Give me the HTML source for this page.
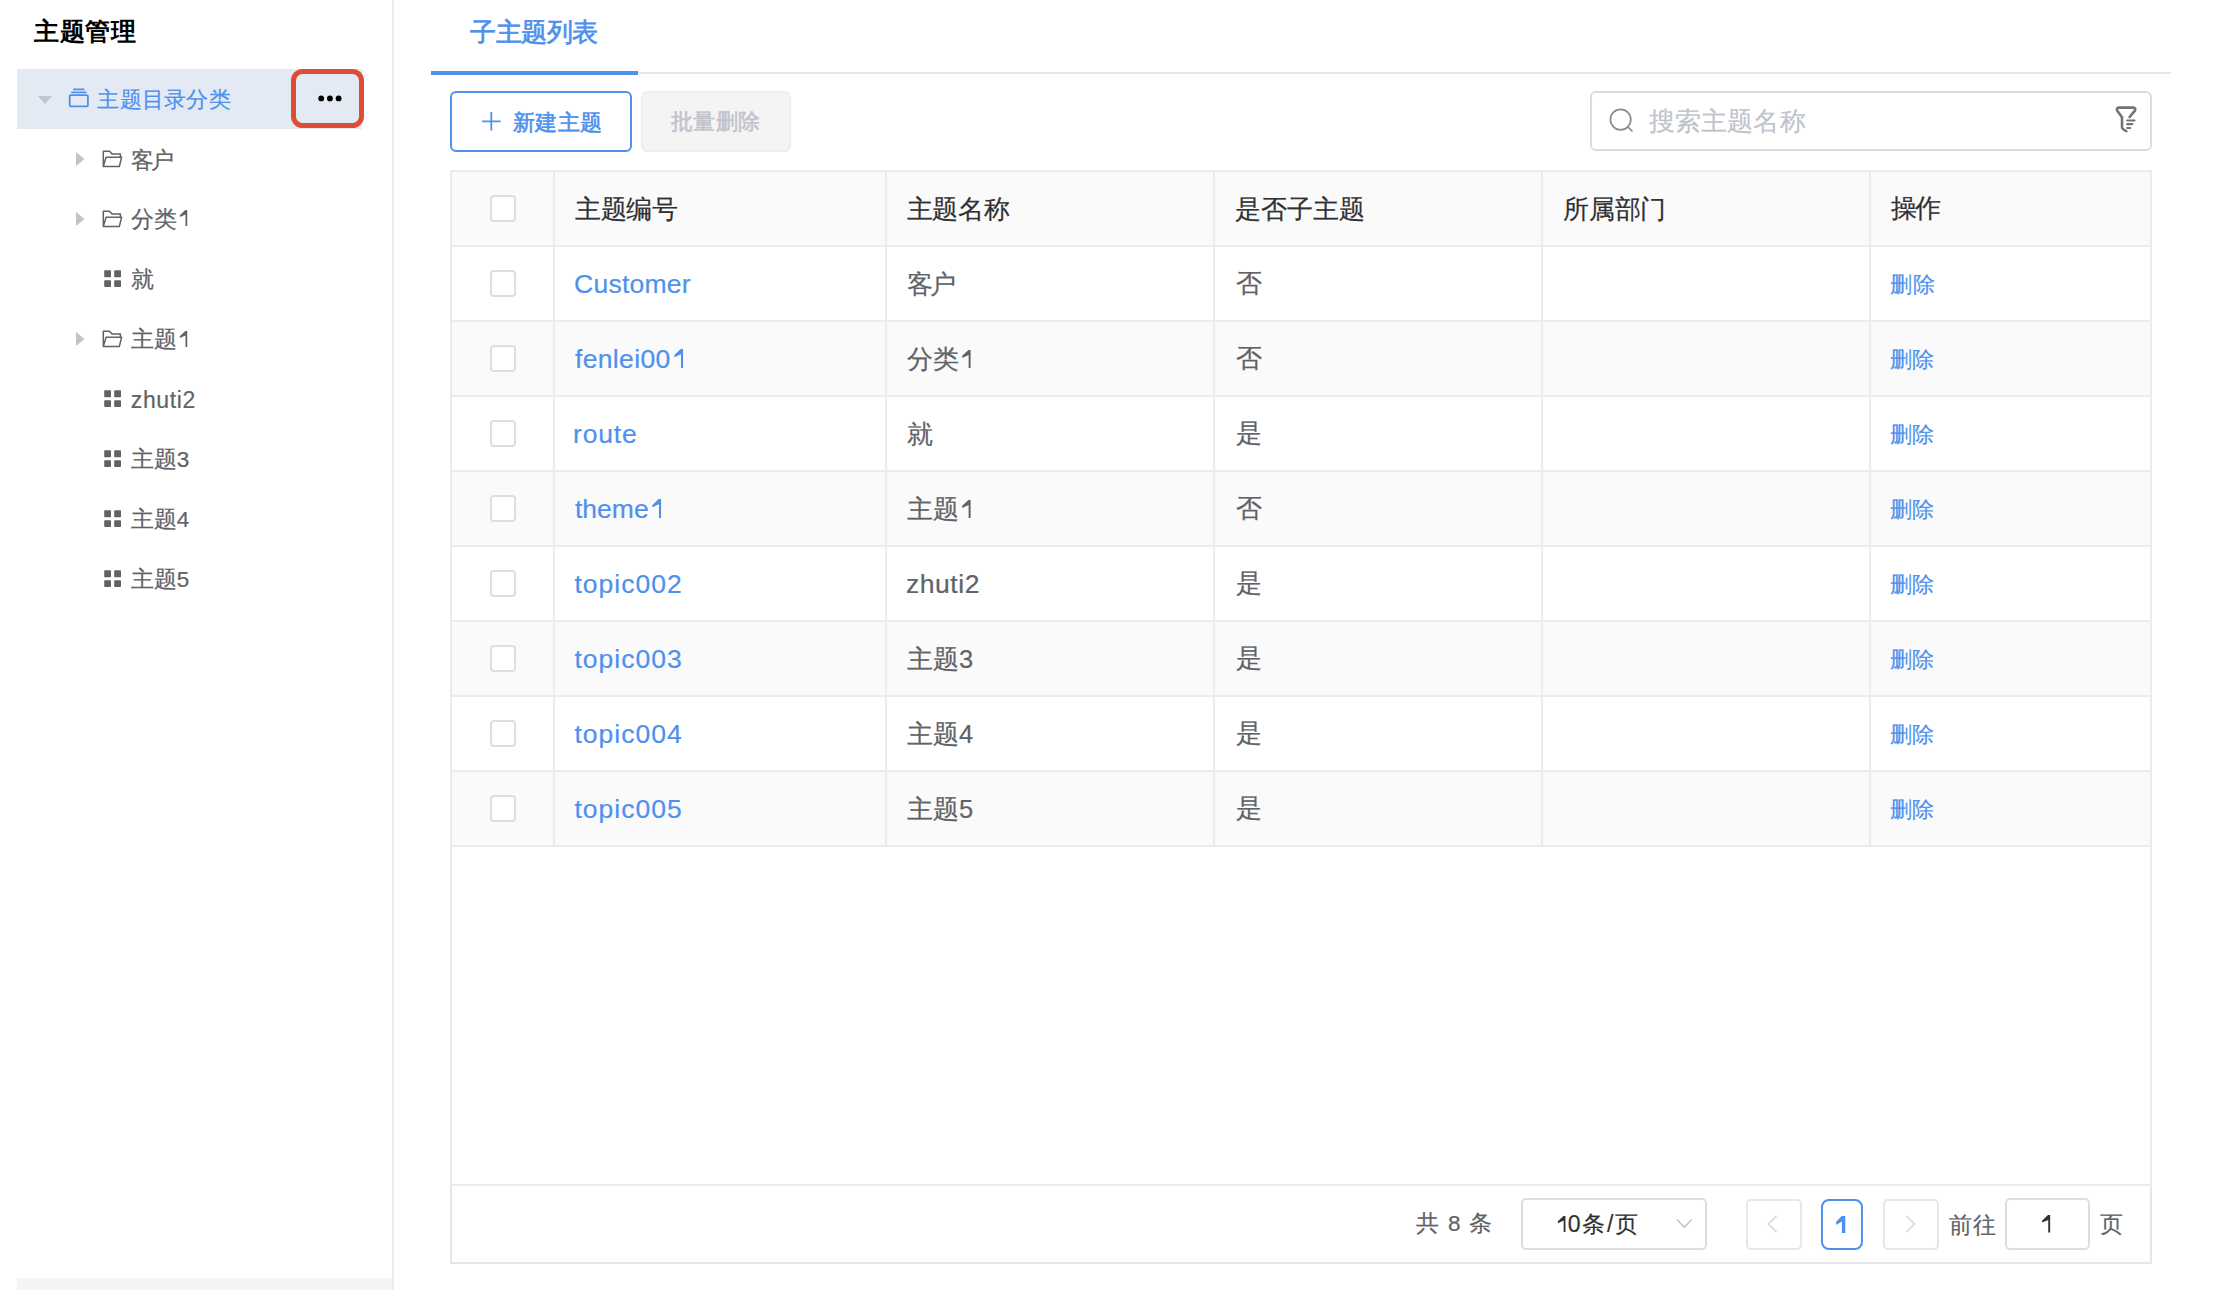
<!DOCTYPE html>
<html><head><meta charset="utf-8">
<style>
*{box-sizing:border-box;margin:0;padding:0}
html,body{width:2240px;height:1312px;overflow:hidden;background:#fff}
body{position:relative;font-family:"Liberation Sans",sans-serif;color:#606266}
.a{position:absolute;white-space:nowrap}
.t{line-height:1}
</style></head><body>
<div class="a" style="left:17px;top:69px;width:345px;height:60px;background:#e3eaf4"></div>
<svg class="a" style="left:38px;top:96px" width="14" height="8" viewBox="0 0 14 8"><path d="M0 0H14L7 8Z" fill="#c0c4cc"/></svg>
<svg class="a" style="left:68px;top:88px" width="22" height="20" viewBox="0 0 22 20"><g fill="none" stroke="#4e91ec" stroke-width="1.8"><rect x="1.7" y="7.1" width="18.2" height="11.2" rx="1"/><path d="M3.9 4.3H17.8M5.9 1.4H15.6" stroke-linecap="round"/></g></svg>
<div class="a" style="left:291px;top:69px;width:72.5px;height:58.8px;border:5.8px solid #dc4d33;border-radius:11.5px"></div>
<svg class="a" style="left:318px;top:95px" width="24" height="7" viewBox="0 0 24 7"><g fill="#000"><circle cx="3.2" cy="3.4" r="2.9"/><circle cx="11.9" cy="3.4" r="2.9"/><circle cx="20.6" cy="3.4" r="2.9"/></g></svg>
<svg class="a" style="left:76px;top:151.5px" width="9" height="14" viewBox="0 0 9 14"><path d="M0 0V14L8.5 7Z" fill="#c0c4cc"/></svg>
<svg class="a" style="left:102px;top:149.5px" width="21" height="18" viewBox="0 0 21 18"><path d="M1.3 16.6V1.3H7.5L10.3 4.1H18.4V7.1M1.3 16.6H17.3L19.6 7.2H4.1L1.3 16.6Z" fill="none" stroke="#606266" stroke-width="1.5" stroke-linejoin="round"/></svg>
<svg class="a" style="left:76px;top:211.5px" width="9" height="14" viewBox="0 0 9 14"><path d="M0 0V14L8.5 7Z" fill="#c0c4cc"/></svg>
<svg class="a" style="left:102px;top:209.5px" width="21" height="18" viewBox="0 0 21 18"><path d="M1.3 16.6V1.3H7.5L10.3 4.1H18.4V7.1M1.3 16.6H17.3L19.6 7.2H4.1L1.3 16.6Z" fill="none" stroke="#606266" stroke-width="1.5" stroke-linejoin="round"/></svg>
<svg class="a" style="left:104px;top:270px" width="17" height="17" viewBox="0 0 17 17"><g fill="#606266"><rect x="0.2" y="0.2" width="6.8" height="7" rx="0.7"/><rect x="10.2" y="0.2" width="6.8" height="7" rx="0.7"/><rect x="0.2" y="10.2" width="6.8" height="6.8" rx="0.7"/><rect x="10.2" y="10.2" width="6.8" height="6.8" rx="0.7"/></g></svg>
<svg class="a" style="left:76px;top:331.5px" width="9" height="14" viewBox="0 0 9 14"><path d="M0 0V14L8.5 7Z" fill="#c0c4cc"/></svg>
<svg class="a" style="left:102px;top:329.5px" width="21" height="18" viewBox="0 0 21 18"><path d="M1.3 16.6V1.3H7.5L10.3 4.1H18.4V7.1M1.3 16.6H17.3L19.6 7.2H4.1L1.3 16.6Z" fill="none" stroke="#606266" stroke-width="1.5" stroke-linejoin="round"/></svg>
<svg class="a" style="left:104px;top:390px" width="17" height="17" viewBox="0 0 17 17"><g fill="#606266"><rect x="0.2" y="0.2" width="6.8" height="7" rx="0.7"/><rect x="10.2" y="0.2" width="6.8" height="7" rx="0.7"/><rect x="0.2" y="10.2" width="6.8" height="6.8" rx="0.7"/><rect x="10.2" y="10.2" width="6.8" height="6.8" rx="0.7"/></g></svg>
<svg class="a" style="left:104px;top:450px" width="17" height="17" viewBox="0 0 17 17"><g fill="#606266"><rect x="0.2" y="0.2" width="6.8" height="7" rx="0.7"/><rect x="10.2" y="0.2" width="6.8" height="7" rx="0.7"/><rect x="0.2" y="10.2" width="6.8" height="6.8" rx="0.7"/><rect x="10.2" y="10.2" width="6.8" height="6.8" rx="0.7"/></g></svg>
<svg class="a" style="left:104px;top:510px" width="17" height="17" viewBox="0 0 17 17"><g fill="#606266"><rect x="0.2" y="0.2" width="6.8" height="7" rx="0.7"/><rect x="10.2" y="0.2" width="6.8" height="7" rx="0.7"/><rect x="0.2" y="10.2" width="6.8" height="6.8" rx="0.7"/><rect x="10.2" y="10.2" width="6.8" height="6.8" rx="0.7"/></g></svg>
<svg class="a" style="left:104px;top:570px" width="17" height="17" viewBox="0 0 17 17"><g fill="#606266"><rect x="0.2" y="0.2" width="6.8" height="7" rx="0.7"/><rect x="10.2" y="0.2" width="6.8" height="7" rx="0.7"/><rect x="0.2" y="10.2" width="6.8" height="6.8" rx="0.7"/><rect x="10.2" y="10.2" width="6.8" height="6.8" rx="0.7"/></g></svg>
<div class="a" style="left:392px;top:0;width:2px;height:1290px;background:#ebebf2"></div>
<div class="a" style="left:17px;top:1278px;width:375px;height:12px;background:#f4f4f5"></div>
<div class="a" style="left:431px;top:72px;width:1740px;height:2px;background:#e4e6eb"></div>
<div class="a" style="left:431px;top:70.5px;width:207px;height:4px;background:#4e91ec"></div>
<div class="a" style="left:450px;top:91px;width:182px;height:60.5px;border:2px solid #4e91ec;border-radius:6px"></div>
<svg class="a" style="left:482px;top:112px" width="19" height="19" viewBox="0 0 19 19"><path d="M9.3 0V18.6M0 9.3H18.6" stroke="#4e91ec" stroke-width="1.8"/></svg>
<div class="a" style="left:640.5px;top:91px;width:150px;height:60.5px;border:2px solid #ebeef5;background:#f4f4f5;border-radius:6px"></div>
<div class="a" style="left:1590px;top:91px;width:562px;height:60px;border:2px solid #dadcdf;border-radius:6px"></div>
<svg class="a" style="left:1608px;top:107px" width="26" height="26" viewBox="0 0 26 26"><g fill="none" stroke="#8a8c90" stroke-width="1.7"><circle cx="12.6" cy="12.6" r="10.2"/><path d="M20 20L24 24" stroke-linecap="round"/></g></svg>
<svg class="a" style="left:2114px;top:105px" width="24" height="28" viewBox="0 0 24 28"><g fill="none" stroke="#737373" stroke-width="2.6" stroke-linecap="round" stroke-linejoin="round"><path d="M8 12.3L3.3 5.7C2.4 4.4 3.1 2.6 4.7 2.6H19.4C21 2.6 21.8 4.4 20.9 5.6L15.6 12"/><path d="M8 12.3V22.3C8 23.6 9.6 24.9 12.3 26.2"/><path d="M13.2 15.5H20.5M13.2 19.2H18.2M13.2 23H16.2" stroke-width="2.2"/></g></svg>
<div class="a" style="left:450px;top:170px;width:1702px;height:1016px;border:2px solid #ebecf1"></div>
<div class="a" style="left:452px;top:172px;width:1698px;height:73px;background:#fafafa"></div>
<div class="a" style="left:452px;top:322px;width:1698px;height:73px;background:#fafafa"></div>
<div class="a" style="left:452px;top:472px;width:1698px;height:73px;background:#fafafa"></div>
<div class="a" style="left:452px;top:622px;width:1698px;height:73px;background:#fafafa"></div>
<div class="a" style="left:452px;top:772px;width:1698px;height:73px;background:#fafafa"></div>
<div class="a" style="left:452px;top:245px;width:1698px;height:2px;background:#ebecf1"></div>
<div class="a" style="left:452px;top:320px;width:1698px;height:2px;background:#ebecf1"></div>
<div class="a" style="left:452px;top:395px;width:1698px;height:2px;background:#ebecf1"></div>
<div class="a" style="left:452px;top:470px;width:1698px;height:2px;background:#ebecf1"></div>
<div class="a" style="left:452px;top:545px;width:1698px;height:2px;background:#ebecf1"></div>
<div class="a" style="left:452px;top:620px;width:1698px;height:2px;background:#ebecf1"></div>
<div class="a" style="left:452px;top:695px;width:1698px;height:2px;background:#ebecf1"></div>
<div class="a" style="left:452px;top:770px;width:1698px;height:2px;background:#ebecf1"></div>
<div class="a" style="left:452px;top:845px;width:1698px;height:2px;background:#ebecf1"></div>
<div class="a" style="left:553px;top:172px;width:2px;height:675px;background:#ebecf1"></div>
<div class="a" style="left:885px;top:172px;width:2px;height:675px;background:#ebecf1"></div>
<div class="a" style="left:1213px;top:172px;width:2px;height:675px;background:#ebecf1"></div>
<div class="a" style="left:1541px;top:172px;width:2px;height:675px;background:#ebecf1"></div>
<div class="a" style="left:1869px;top:172px;width:2px;height:675px;background:#ebecf1"></div>
<div class="a" style="left:490px;top:195.3px;width:26px;height:26.4px;border:2px solid #dddee3;border-radius:4px;background:#fff"></div>
<div class="a" style="left:490px;top:270.3px;width:26px;height:26.4px;border:2px solid #dddee3;border-radius:4px;background:#fff"></div>
<div class="a" style="left:490px;top:345.3px;width:26px;height:26.4px;border:2px solid #dddee3;border-radius:4px;background:#fff"></div>
<div class="a" style="left:490px;top:420.3px;width:26px;height:26.4px;border:2px solid #dddee3;border-radius:4px;background:#fff"></div>
<div class="a" style="left:490px;top:495.3px;width:26px;height:26.4px;border:2px solid #dddee3;border-radius:4px;background:#fff"></div>
<div class="a" style="left:490px;top:570.3px;width:26px;height:26.4px;border:2px solid #dddee3;border-radius:4px;background:#fff"></div>
<div class="a" style="left:490px;top:645.3px;width:26px;height:26.4px;border:2px solid #dddee3;border-radius:4px;background:#fff"></div>
<div class="a" style="left:490px;top:720.3px;width:26px;height:26.4px;border:2px solid #dddee3;border-radius:4px;background:#fff"></div>
<div class="a" style="left:490px;top:795.3px;width:26px;height:26.4px;border:2px solid #dddee3;border-radius:4px;background:#fff"></div>
<div class="a" style="left:450px;top:1186px;width:1702px;height:77.5px;border:2px solid #e6e6e8;border-top:none"></div>
<div class="a" style="left:1521px;top:1198.3px;width:186px;height:51.4px;border:2px solid #dcdde0;border-radius:5px"></div>
<svg class="a" style="left:1676px;top:1218px" width="17" height="11" viewBox="0 0 17 11"><path d="M1 1.5L8.3 9.3L15.6 1.5" fill="none" stroke="#c0c4cc" stroke-width="1.5"/></svg>
<div class="a" style="left:1746px;top:1198.5px;width:55.5px;height:51px;border:2px solid #e4e7ed;border-radius:5px"></div>
<svg class="a" style="left:1767px;top:1215px" width="11" height="18" viewBox="0 0 11 18"><path d="M9.5 1L1.5 9L9.5 17" fill="none" stroke="#d3d6dc" stroke-width="1.5"/></svg>
<div class="a" style="left:1821px;top:1198.5px;width:42px;height:51px;border:2px solid #4e91ec;border-radius:8px"></div>
<div class="a" style="left:1883px;top:1198.5px;width:55.5px;height:51px;border:2px solid #e4e7ed;border-radius:5px"></div>
<svg class="a" style="left:1905px;top:1215px" width="11" height="18" viewBox="0 0 11 18"><path d="M1.5 1L9.5 9L1.5 17" fill="none" stroke="#d3d6dc" stroke-width="1.5"/></svg>
<div class="a" style="left:2004.5px;top:1198.3px;width:85.5px;height:51.4px;border:2px solid #dcdde0;border-radius:5px"></div>
<div class="a t k0" style="left:34.41px;top:19.19px;font-size:25px;color:#000;font-weight:700;letter-spacing:0.48px">主题管理</div>
<div class="a t k1" style="left:97.42px;top:88.72px;font-size:22px;color:#4e91ec;letter-spacing:0.22px;-webkit-text-stroke:0.2px #4e91ec">主题目录分类</div>
<div class="a t k2" style="left:130.82px;top:149.50px;font-size:22.5px;color:#606266;letter-spacing:-2.52px;-webkit-text-stroke:0.2px #606266">客户</div>
<div class="a t k3" style="left:130.82px;top:208.50px;font-size:22.5px;color:#606266;-webkit-text-stroke:0.2px #606266">分类<svg width="12.51" height="16.09" style="vertical-align:baseline"><path d="M10.24 0V16.09H8.48V4.50L2.81 6.97V5.17L8.26 0Z" fill="#606266"/></svg></div>
<div class="a t k4" style="left:130.82px;top:269.00px;font-size:22.5px;color:#606266;-webkit-text-stroke:0.2px #606266">就</div>
<div class="a t k5" style="left:130.75px;top:329.00px;font-size:22.5px;color:#606266;-webkit-text-stroke:0.2px #606266">主题<svg width="12.51" height="16.09" style="vertical-align:baseline"><path d="M10.24 0V16.09H8.48V4.50L2.81 6.97V5.17L8.26 0Z" fill="#606266"/></svg></div>
<div class="a t k6" style="left:130.75px;top:388.84px;font-size:23px;color:#606266;letter-spacing:0.63px;-webkit-text-stroke:0.2px #606266">zhuti2</div>
<div class="a t k7" style="left:130.75px;top:449.00px;font-size:22.5px;color:#606266;-webkit-text-stroke:0.2px #606266">主题3</div>
<div class="a t k8" style="left:130.75px;top:509.00px;font-size:22.5px;color:#606266;-webkit-text-stroke:0.2px #606266">主题4</div>
<div class="a t k9" style="left:130.75px;top:569.00px;font-size:22.5px;color:#606266;-webkit-text-stroke:0.2px #606266">主题5</div>
<div class="a t k10" style="left:470.00px;top:19.50px;font-size:25.5px;color:#4e91ec;letter-spacing:-0.45px;-webkit-text-stroke:0.7px #4e91ec">子主题列表</div>
<div class="a t k11" style="left:512.50px;top:111.50px;font-size:22px;color:#4e91ec;letter-spacing:0.60px;-webkit-text-stroke:0.6px #4e91ec">新建主题</div>
<div class="a t k12" style="left:671.00px;top:111.00px;font-size:22px;color:#c0c4cc;letter-spacing:0.30px;-webkit-text-stroke:0.6px #c0c4cc">批量删除</div>
<div class="a t k13" style="left:1649.00px;top:109.00px;font-size:25.5px;color:#c0c4cc;letter-spacing:0.11px;-webkit-text-stroke:0.2px #c0c4cc">搜索主题名称</div>
<div class="a t k14" style="left:575.00px;top:197.00px;font-size:25.5px;color:#303133;letter-spacing:-0.30px;-webkit-text-stroke:0.2px #303133">主题编号</div>
<div class="a t k15" style="left:906.50px;top:197.00px;font-size:25.5px;color:#303133;letter-spacing:-0.12px;-webkit-text-stroke:0.2px #303133">主题名称</div>
<div class="a t k16" style="left:1235.00px;top:197.00px;font-size:25.5px;color:#303133;-webkit-text-stroke:0.2px #303133">是否子主题</div>
<div class="a t k17" style="left:1562.91px;top:197.00px;font-size:25.5px;color:#303133;letter-spacing:-0.18px;-webkit-text-stroke:0.2px #303133">所属部门</div>
<div class="a t k18" style="left:1891.00px;top:195.50px;font-size:25.5px;color:#303133;letter-spacing:-1.80px;-webkit-text-stroke:0.2px #303133">操作</div>
<div class="a t k19" style="left:574.00px;top:271.00px;font-size:26.5px;color:#4e91ec;letter-spacing:0.26px;-webkit-text-stroke:0.2px #4e91ec">Customer</div>
<div class="a t k20" style="left:907.00px;top:272.00px;font-size:25.5px;color:#606266;letter-spacing:-2.70px;-webkit-text-stroke:0.2px #606266">客户</div>
<div class="a t k21" style="left:1235.91px;top:271.38px;font-size:25.5px;color:#606266;-webkit-text-stroke:0.2px #606266">否</div>
<div class="a t k22" style="left:1890.00px;top:274.00px;font-size:22px;color:#4e91ec;letter-spacing:0.90px;-webkit-text-stroke:0.2px #4e91ec">删除</div>
<div class="a t k23" style="left:575.00px;top:346.00px;font-size:26.5px;color:#4e91ec;letter-spacing:0.34px;-webkit-text-stroke:0.2px #4e91ec">fenlei00<svg width="14.73" height="18.95" style="vertical-align:baseline"><path d="M12.06 0V18.95H9.99V5.30L3.31 8.21V6.10L9.73 0Z" fill="#4e91ec"/></svg></div>
<div class="a t k24" style="left:907.00px;top:347.00px;font-size:25.5px;color:#606266;-webkit-text-stroke:0.2px #606266">分类<svg width="14.18" height="18.23" style="vertical-align:baseline"><path d="M11.60 0V18.23H9.61V5.10L3.19 7.91V5.87L9.36 0Z" fill="#606266"/></svg></div>
<div class="a t k25" style="left:1235.91px;top:346.38px;font-size:25.5px;color:#606266;-webkit-text-stroke:0.2px #606266">否</div>
<div class="a t k26" style="left:1890.00px;top:349.00px;font-size:22px;color:#4e91ec;-webkit-text-stroke:0.2px #4e91ec">删除</div>
<div class="a t k27" style="left:573.00px;top:421.00px;font-size:26.5px;color:#4e91ec;letter-spacing:0.81px;-webkit-text-stroke:0.2px #4e91ec">route</div>
<div class="a t k28" style="left:907.00px;top:422.00px;font-size:25.5px;color:#606266;-webkit-text-stroke:0.2px #606266">就</div>
<div class="a t k29" style="left:1235.91px;top:421.38px;font-size:25.5px;color:#606266;-webkit-text-stroke:0.2px #606266">是</div>
<div class="a t k30" style="left:1890.00px;top:424.00px;font-size:22px;color:#4e91ec;-webkit-text-stroke:0.2px #4e91ec">删除</div>
<div class="a t k31" style="left:575.00px;top:496.00px;font-size:26.5px;color:#4e91ec;-webkit-text-stroke:0.2px #4e91ec">theme<svg width="14.73" height="18.95" style="vertical-align:baseline"><path d="M12.06 0V18.95H9.99V5.30L3.31 8.21V6.10L9.73 0Z" fill="#4e91ec"/></svg></div>
<div class="a t k32" style="left:907.00px;top:497.00px;font-size:25.5px;color:#606266;-webkit-text-stroke:0.2px #606266">主题<svg width="14.18" height="18.23" style="vertical-align:baseline"><path d="M11.60 0V18.23H9.61V5.10L3.19 7.91V5.87L9.36 0Z" fill="#606266"/></svg></div>
<div class="a t k33" style="left:1235.91px;top:496.38px;font-size:25.5px;color:#606266;-webkit-text-stroke:0.2px #606266">否</div>
<div class="a t k34" style="left:1890.00px;top:499.00px;font-size:22px;color:#4e91ec;-webkit-text-stroke:0.2px #4e91ec">删除</div>
<div class="a t k35" style="left:574.50px;top:571.00px;font-size:26.5px;color:#4e91ec;letter-spacing:1.00px;-webkit-text-stroke:0.2px #4e91ec">topic002</div>
<div class="a t k36" style="left:906.00px;top:571.00px;font-size:26.5px;color:#606266;letter-spacing:0.54px;-webkit-text-stroke:0.2px #606266">zhuti2</div>
<div class="a t k37" style="left:1235.91px;top:571.38px;font-size:25.5px;color:#606266;-webkit-text-stroke:0.2px #606266">是</div>
<div class="a t k38" style="left:1890.00px;top:574.00px;font-size:22px;color:#4e91ec;-webkit-text-stroke:0.2px #4e91ec">删除</div>
<div class="a t k39" style="left:574.50px;top:646.00px;font-size:26.5px;color:#4e91ec;letter-spacing:1.00px;-webkit-text-stroke:0.2px #4e91ec">topic003</div>
<div class="a t k40" style="left:907.00px;top:647.00px;font-size:25.5px;color:#606266;-webkit-text-stroke:0.2px #606266">主题3</div>
<div class="a t k41" style="left:1235.91px;top:646.38px;font-size:25.5px;color:#606266;-webkit-text-stroke:0.2px #606266">是</div>
<div class="a t k42" style="left:1890.00px;top:649.00px;font-size:22px;color:#4e91ec;-webkit-text-stroke:0.2px #4e91ec">删除</div>
<div class="a t k43" style="left:574.50px;top:721.00px;font-size:26.5px;color:#4e91ec;letter-spacing:1.00px;-webkit-text-stroke:0.2px #4e91ec">topic004</div>
<div class="a t k44" style="left:907.00px;top:722.00px;font-size:25.5px;color:#606266;-webkit-text-stroke:0.2px #606266">主题4</div>
<div class="a t k45" style="left:1235.91px;top:721.38px;font-size:25.5px;color:#606266;-webkit-text-stroke:0.2px #606266">是</div>
<div class="a t k46" style="left:1890.00px;top:724.00px;font-size:22px;color:#4e91ec;-webkit-text-stroke:0.2px #4e91ec">删除</div>
<div class="a t k47" style="left:574.50px;top:796.00px;font-size:26.5px;color:#4e91ec;letter-spacing:1.00px;-webkit-text-stroke:0.2px #4e91ec">topic005</div>
<div class="a t k48" style="left:907.00px;top:797.00px;font-size:25.5px;color:#606266;-webkit-text-stroke:0.2px #606266">主题5</div>
<div class="a t k49" style="left:1235.91px;top:796.38px;font-size:25.5px;color:#606266;-webkit-text-stroke:0.2px #606266">是</div>
<div class="a t k50" style="left:1890.00px;top:799.00px;font-size:22px;color:#4e91ec;-webkit-text-stroke:0.2px #4e91ec">删除</div>
<div class="a t k51" style="left:1416.00px;top:1213.34px;font-size:22.5px;color:#606266;letter-spacing:1.35px;-webkit-text-stroke:0.2px #606266">共 8 条</div>
<div class="a t k52" style="left:1555.00px;top:1213.12px;font-size:23px;color:#303133;letter-spacing:1.74px;-webkit-text-stroke:0.2px #303133"><svg width="12.79" height="16.45" style="vertical-align:baseline"><path d="M10.46 0V16.45H8.67V4.60L2.88 7.13V5.29L8.44 0Z" fill="#303133"/></svg>0条/页</div>
<div class="a t k53" style="left:1834.00px;top:1213.10px;font-size:24px;color:#4e91ec;font-weight:700;-webkit-text-stroke:0.2px #4e91ec"><svg width="13.34" height="17.16" style="vertical-align:baseline"><path d="M11.28 0V17.16H7.92V5.52L2.16 8.88V5.76L7.68 0Z" fill="#4e91ec"/></svg></div>
<div class="a t k54" style="left:1949.00px;top:1214.67px;font-size:22.5px;color:#606266;letter-spacing:0.90px;-webkit-text-stroke:0.2px #606266">前往</div>
<div class="a t k55" style="left:2038.75px;top:1213.00px;font-size:24.5px;color:#303133;-webkit-text-stroke:0.2px #303133"><svg width="13.62" height="17.52" style="vertical-align:baseline"><path d="M11.15 0V17.52H9.24V4.90L3.06 7.59V5.64L8.99 0Z" fill="#303133"/></svg></div>
<div class="a t k56" style="left:2099.50px;top:1214.34px;font-size:22.5px;color:#606266;-webkit-text-stroke:0.2px #606266">页</div>
</body></html>
